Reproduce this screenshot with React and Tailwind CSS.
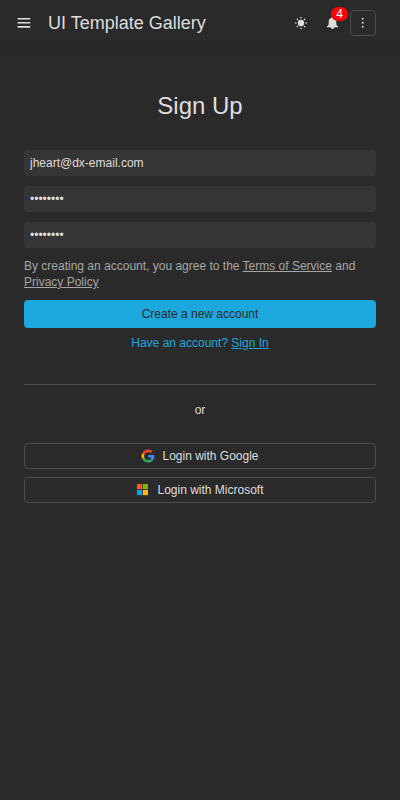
function MenuIcon() {
  return (
    <svg width="14" height="12" viewBox="0 0 14 12" fill="#dedede">
      <rect x="0.5" y="0.9" width="12.8" height="1.6" rx="0.4" />
      <rect x="0.5" y="5" width="12.8" height="1.6" rx="0.4" />
      <rect x="0.5" y="9.100" width="12.8" height="1.6" rx="0.4" />
    </svg>
  );
}

function SunIcon() {
  return (
    <svg width="14" height="14" viewBox="0 0 14 14" fill="#dedede">
      <circle cx="7" cy="7" r="3.2" />
      <circle cx="7" cy="1.800" r="0.8" />
      <circle cx="7" cy="12.2" r="0.8" />
      <circle cx="1.800" cy="7" r="0.8" />
      <circle cx="12.2" cy="7" r="0.8" />
      <circle cx="3.4" cy="3.4" r="0.8" />
      <circle cx="10.6" cy="3.4" r="0.8" />
      <circle cx="3.4" cy="10.6" r="0.8" />
      <circle cx="10.6" cy="10.6" r="0.8" />
    </svg>
  );
}

function BellIcon() {
  return (
    <svg width="14" height="14" viewBox="0 0 14 14" fill="#dedede">
      <path d="M5.700 1h1.600v.8c1.900.4 3 1.900 3 3.700v2.700c0 .9.600 1.300 1.700 2.100v.9H1v-.9c1.100-.8 1.700-1.200 1.700-2.100V5.500c0-1.800 1.100-3.300 3-3.700z" />
      <circle cx="6.500" cy="11.3" r="1.700" />
    </svg>
  );
}

function GoogleIcon() {
  return (
    <svg width="13" height="13" viewBox="-2 1.500 48 48" className="overflow-visible">
      <path fill="#EA4335" d="M24 9.500c3.540 0 6.710 1.220 9.210 3.600l6.850-6.850C35.900 2.380 30.470 0 24 0 14.620 0 6.510 5.380 2.560 13.220l7.980 6.190C12.430 13.720 17.740 9.500 24 9.500z" />
      <path fill="#4285F4" d="M46.980 24.550c0-1.570-.15-3.090-.38-4.550H24v9.020h12.940c-.58 2.960-2.260 5.480-4.780 7.180l7.730 6c4.510-4.180 7.090-10.360 7.090-17.650z" />
      <path fill="#FBBC05" d="M10.530 28.590c-.48-1.450-.76-2.990-.76-4.590s.27-3.140.76-4.590l-7.980-6.190C.92 16.460 0 20.120 0 24s.92 7.540 2.560 10.780l7.970-6.190z" />
      <path fill="#34A853" d="M24 48c6.480 0 11.930-2.130 15.890-5.810l-7.730-6c-2.150 1.450-4.920 2.300-8.160 2.300-6.260 0-11.570-4.220-13.470-9.910l-7.980 6.190C6.510 42.620 14.620 48 24 48z" />
    </svg>
  );
}

function MicrosoftIcon() {
  return (
    <svg width="13" height="12" viewBox="0 0 13 12">
      <rect x="0.9" y="0" width="5.2" height="5.2" fill="#ff5722" />
      <rect x="6.800" y="0" width="5.2" height="5.2" fill="#7cb305" />
      <rect x="0.9" y="6" width="5.2" height="5.2" fill="#03a4ef" />
      <rect x="6.800" y="6" width="5.2" height="5.2" fill="#ffb900" />
    </svg>
  );
}

function Field({ type, value, label }) {
  return (
    <input
      type={type}
      defaultValue={value}
      aria-label={label}
      className="h-[26px] w-full rounded bg-[#353535] px-1.5 text-xs text-[#dedede] outline-none"
    />
  );
}

function SocialButton({ icon, children }) {
  return (
    <button className="flex h-[26px] w-full items-center justify-center gap-2 rounded border border-[#4d4d4d] text-xs">
      {icon}
      <span>{children}</span>
    </button>
  );
}

export default function App() {
  return (
    <div className="min-h-screen bg-[#2a2a2a] font-['Liberation_Sans',Arial,sans-serif] text-[#dedede]">
      <header className="flex h-[46px] items-center bg-[#2a2a2a] pr-6 pl-[17px] shadow-[0_2px_4px_rgba(0,0,0,0.12)]">
        <button aria-label="Menu" className="mr-[17px]"><MenuIcon /></button>
        <h1 className="text-lg leading-6">UI Template Gallery</h1>
        <div className="ml-auto flex items-center">
          <button aria-label="Theme" className="mr-[18px]"><SunIcon /></button>
          <button aria-label="Notifications" className="relative mr-[10px]">
            <BellIcon />
            <span className="absolute -top-[9px] left-[5px] flex h-[14px] w-[17px] items-center justify-center rounded-full bg-[#ff0000] text-xs leading-none text-white">4</span>
          </button>
          <button aria-label="More" className="flex h-[26px] w-[26px] items-center justify-center rounded border border-[#4d4d4d]">
            <svg width="12" height="12" viewBox="0 0 12 12" fill="#dedede">
              <circle cx="5.7" cy="1.7" r="0.95" />
              <circle cx="5.7" cy="5.700" r="0.95" />
              <circle cx="5.7" cy="9.700" r="0.95" />
            </svg>
          </button>
        </div>
      </header>
      <main className="px-6 pt-[44px]">
        <h2 className="text-center text-2xl leading-8">Sign Up</h2>
        <form className="mt-7 flex flex-col gap-2.5">
          <Field type="text" value="jheart@dx-email.com" label="Email" />
          <Field type="password" value="password" label="Password" />
          <Field type="password" value="password" label="Confirm password" />
          <p className="text-xs leading-4 text-[#a6a6a6]">
            By creating an account, you agree to the <a className="underline">Terms of Service</a> and <a className="underline">Privacy Policy</a>
          </p>
          <button type="button" className="h-7 rounded bg-[#1ca8dd] text-xs text-[#2a2a2a]">Create a new account</button>
        </form>
        <p className="mt-[7px] text-center text-xs leading-4 text-[#1ca8dd]">
          Have an account? <a className="underline">Sign In</a>
        </p>
        <hr className="mt-[33px] border-t border-[#4d4d4d]" />
        <p className="mt-[17px] text-center text-xs leading-4">or</p>
        <div className="mt-[25px] flex flex-col gap-2">
          <SocialButton icon={<GoogleIcon />}>Login with Google</SocialButton>
          <SocialButton icon={<MicrosoftIcon />}>Login with Microsoft</SocialButton>
        </div>
      </main>
    </div>
  );
}
